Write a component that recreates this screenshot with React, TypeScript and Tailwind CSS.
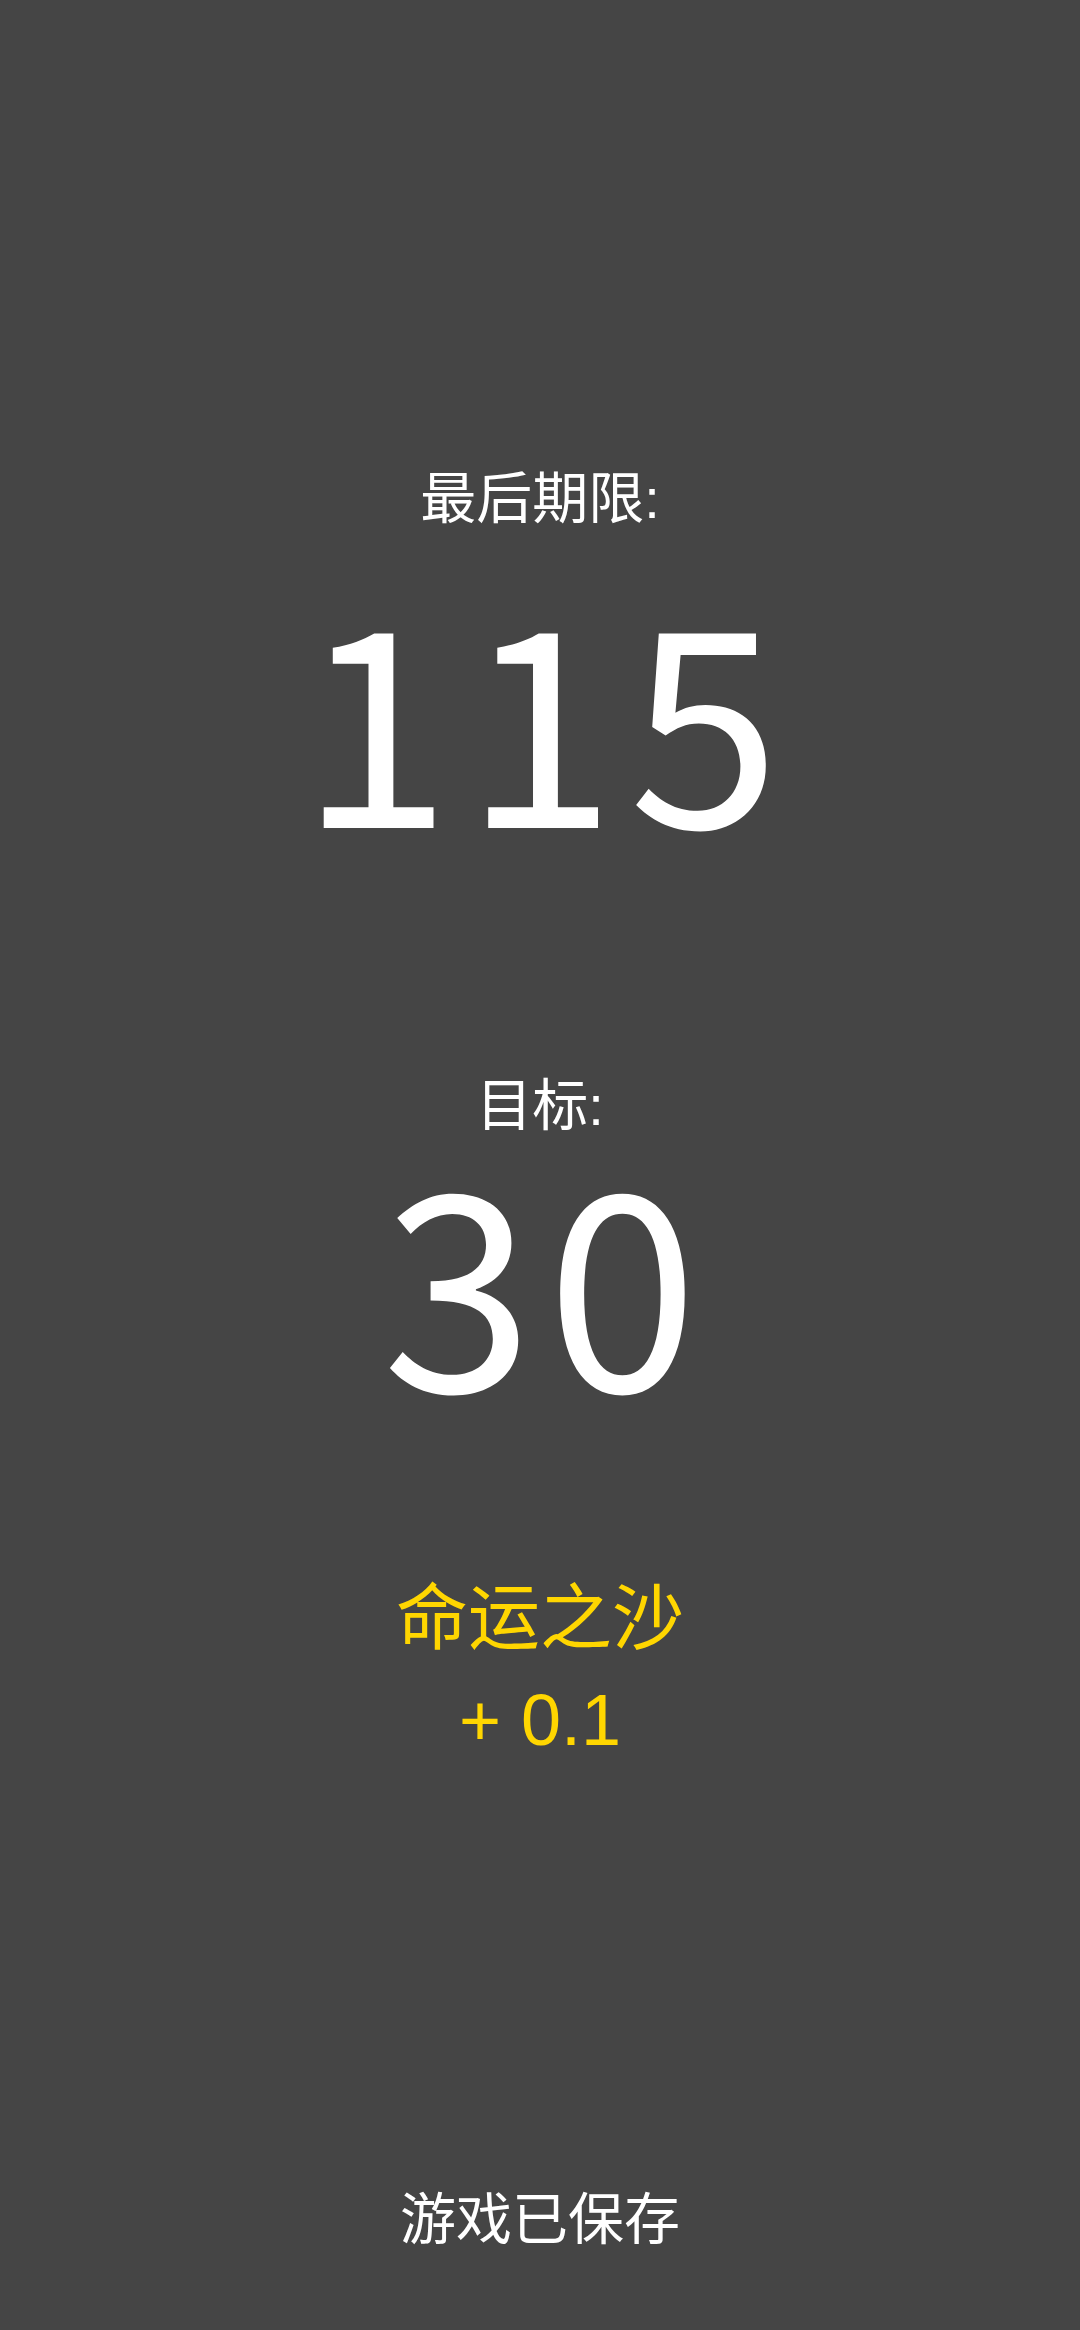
export default function App() {
  const font = {
    fontFamily: '"Liberation Sans", "Noto Sans CJK SC", sans-serif',
  };
  const bigNumber = {
    fontFamily: '"Noto Sans CJK SC", sans-serif',
  };

  return (
    <div
      className="min-h-screen bg-[#454545] flex flex-col items-center text-center text-white pt-[471px] pb-[82px]"
      style={font}
    >
      {/* deadline */}
      <div className="text-[56px] leading-none">最后期限:</div>
      <div className="text-[273px] leading-none tracking-[13px] pl-[13px] mt-[46px]" style={bigNumber}>
        115
      </div>

      {/* goal */}
      <div className="text-[56px] leading-none mt-[232px]">目标:</div>
      <div className="text-[273px] leading-none tracking-[13px] pl-[13px] mt-[3px]" style={bigNumber}>
        30
      </div>

      {/* bonus */}
      <div className="text-[72px] leading-none text-[#ffd600] mt-[172px]">命运之沙</div>
      <div className="text-[72px] leading-none text-[#ffd600] mt-[30px]">+ 0.1</div>

      <div className="text-[56px] leading-none mt-auto">游戏已保存</div>
    </div>
  );
}
